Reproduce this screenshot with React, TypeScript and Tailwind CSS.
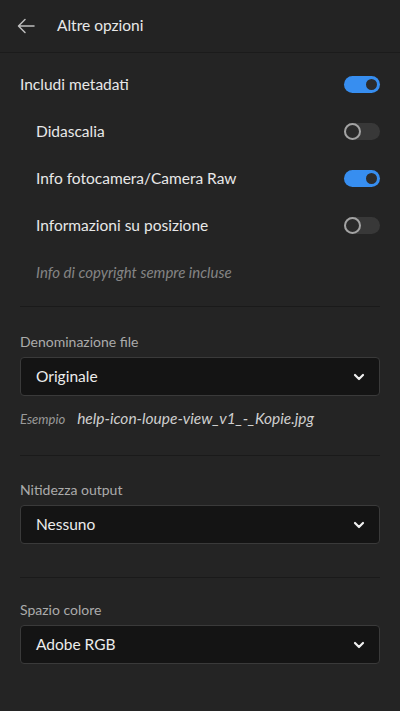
import React from 'react';

const font = { fontFamily: '"Lato", "Noto Sans", sans-serif' };

function Toggle({ on }: { on: boolean }) {
  if (on) {
    return (
      <div className="w-[36px] h-[17px] rounded-full bg-[#378ef0] flex items-center justify-end pr-[1px]">
        <div className="w-[15px] h-[15px] rounded-full bg-[#2c2c2c] border-[2px] border-[#378ef0]" />
      </div>
    );
  }
  return (
    <div className="w-[36px] h-[17px] rounded-full bg-[#383838] flex items-center">
      <div className="w-[17px] h-[17px] rounded-full bg-[#2a2a2a] border-[2px] border-[#a3a3a3]" />
    </div>
  );
}

function Row({ label, on, indent }: { label: string; on: boolean; indent?: boolean }) {
  return (
    <div className={`h-[47px] flex items-center justify-between pr-[20px] ${indent ? 'pl-[36px]' : 'pl-[20px]'}`}>
      <span className="text-[15.5px] text-[#e8e8e8]">{label}</span>
      <Toggle on={on} />
    </div>
  );
}

function Select({ value }: { value: string }) {
  return (
    <div className="mx-[20px] h-[39px] rounded-[4px] bg-[#141414] border border-[#3a3a3a] flex items-center justify-between pl-[15px] pr-[14px]">
      <span className="text-[15.5px] text-[#ececec]">{value}</span>
      <svg width="12" height="8" viewBox="0 0 12 8">
        <path d="M2 2 L6 6 L10 2" fill="none" stroke="#f0f0f0" strokeWidth="2.2" strokeLinecap="round" strokeLinejoin="round" />
      </svg>
    </div>
  );
}

function Divider() {
  return <div className="mx-[20px] h-[1px] bg-[#1a1a1a]" />;
}

export default function App() {
  return (
    <div className="w-[400px] h-[711px] bg-[#242424] flex flex-col" style={font}>
      <div className="h-[53px] flex items-center border-b border-[#1b1b1b] bg-[#232323]">
        <svg className="ml-[17px]" width="18" height="16" viewBox="0 0 18 16">
          <path d="M17 8 H2 M8 1.5 L1.5 8 L8 14.5" fill="none" stroke="#bdbdbd" strokeWidth="1.5" strokeLinecap="round" strokeLinejoin="round" />
        </svg>
        <span className="ml-[22px] text-[15.5px] text-[#e8e8e8]">Altre opzioni</span>
      </div>

      <div className="pt-[8px]">
        <Row label="Includi metadati" on />
        <Row label="Didascalia" on={false} indent />
        <Row label="Info fotocamera/Camera Raw" on indent />
        <Row label="Informazioni su posizione" on={false} indent />
        <div className="h-[47px] flex items-center pl-[36px]">
          <span className="text-[15px] italic text-[#858585]">Info di copyright sempre incluse</span>
        </div>
      </div>

      <div className="mt-[10px]">
        <Divider />
      </div>

      <div className="pt-[24px]">
        <div className="px-[20px] text-[14px] text-[#ababab] mb-[5px]">Denominazione file</div>
        <Select value="Originale" />
        <div className="px-[20px] flex items-baseline gap-[12px] mt-[11px]">
          <span className="text-[13px] italic text-[#9a9a9a]">Esempio</span>
          <span className="text-[15.5px] italic text-[#cfcfcf]">help-icon-loupe-view_v1_-_Kopie.jpg</span>
        </div>
      </div>

      <div className="mt-[25px]">
        <Divider />
      </div>

      <div className="pt-[23px]">
        <div className="px-[20px] text-[14px] text-[#ababab] mb-[5px]">Nitidezza output</div>
        <Select value="Nessuno" />
      </div>

      <div className="mt-[33px]">
        <Divider />
      </div>

      <div className="pt-[21px]">
        <div className="px-[20px] text-[14px] text-[#ababab] mb-[5px]">Spazio colore</div>
        <Select value="Adobe RGB" />
      </div>
    </div>
  );
}
